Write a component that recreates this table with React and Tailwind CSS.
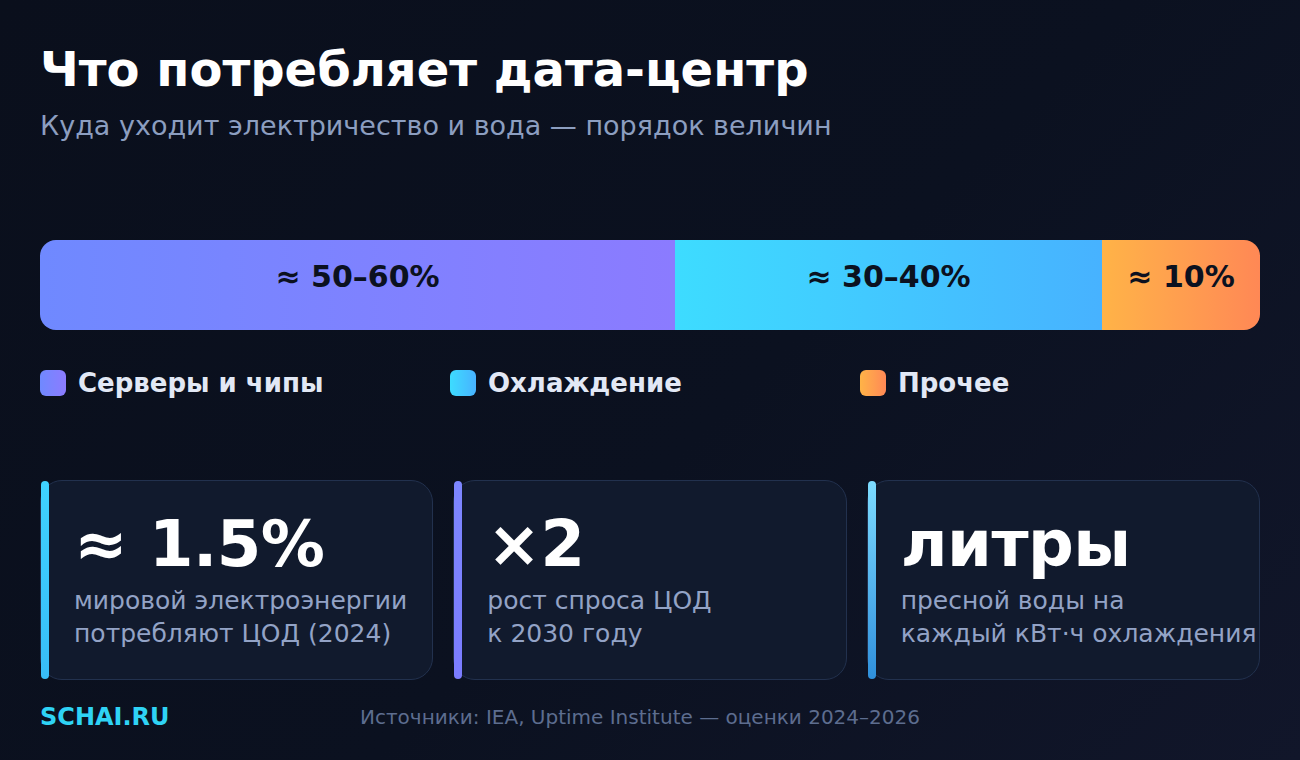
import React from 'react';

const segments = [
  { label: '≈ 50–60%', width: 'w-[635px]', bg: 'bg-gradient-to-r from-[#6f89ff] to-[#8b7bff]', round: 'rounded-l-[16px]' },
  { label: '≈ 30–40%', width: 'w-[427px]', bg: 'bg-gradient-to-r from-[#3ddcff] to-[#47b2ff]', round: '' },
  { label: '≈ 10%', width: 'flex-1', bg: 'bg-gradient-to-r from-[#ffb347] to-[#ff8855]', round: 'rounded-r-[16px]' },
];

const legend = [
  { label: 'Серверы и чипы', swatch: 'bg-gradient-to-r from-[#6f89ff] to-[#8b7bff]' },
  { label: 'Охлаждение', swatch: 'bg-gradient-to-r from-[#3ddcff] to-[#47b2ff]' },
  { label: 'Прочее', swatch: 'bg-gradient-to-r from-[#ffb347] to-[#ff8855]' },
];

const cards = [
  { value: '≈ 1.5%', lines: ['мировой электроэнергии', 'потребляют ЦОД (2024)'], accent: 'bg-gradient-to-b from-[#3fd2ff] to-[#38bdf8]' },
  { value: '×2', lines: ['рост спроса ЦОД', 'к 2030 году'], accent: 'bg-gradient-to-b from-[#7d86ff] to-[#7b7cff]' },
  { value: 'литры', lines: ['пресной воды на', 'каждый кВт·ч охлаждения'], accent: 'bg-gradient-to-b from-[#7ddcff] to-[#2f90dc]' },
];

export default function App() {
  return (
    <div className="w-[1300px] h-[760px] overflow-hidden bg-[linear-gradient(135deg,#0a0f1c_0%,#0b1120_55%,#11162a_100%)] px-10 pt-[45px] font-['DejaVu_Sans',sans-serif]">
      <h1 className="text-[48px] font-bold leading-none text-white">Что потребляет дата-центр</h1>
      <p className="mt-[19px] text-[27px] leading-none text-[#8c9ec0]">Куда уходит электричество и вода — порядок величин</p>

      {/* bar */}
      <div className="mt-[101px] flex h-[90px] w-[1220px]">
        {segments.map((s) => (
          <div key={s.label} className={`${s.width} ${s.bg} ${s.round} flex items-center justify-center pb-[16px]`}>
            <span className="text-[30px] font-bold leading-none text-[#0b1120]">{s.label}</span>
          </div>
        ))}
      </div>

      {/* legend */}
      <div className="mt-10 flex">
        {legend.map((l) => (
          <div key={l.label} className="flex w-[410px] shrink-0 items-center gap-3">
            <span className={`h-[26px] w-[26px] shrink-0 rounded-[6px] ${l.swatch}`}></span>
            <span className="text-[26px] font-bold leading-none text-[#e2e8f5]">{l.label}</span>
          </div>
        ))}
      </div>

      {/* stat cards */}
      <div className="mt-[84px] grid grid-cols-3 gap-5">
        {cards.map((c) => (
          <div key={c.value} className="relative h-[200px] rounded-[22px] border border-[#22314e] bg-[#111a2d] pl-[33px] pt-[31px]">
            <div className={`absolute left-0 top-0 bottom-0 w-2 rounded-full ${c.accent}`}></div>
            <div className="text-[64px] font-bold leading-none tracking-[-0.5px] text-white">{c.value}</div>
            <div className="mt-[8px] text-[25px] leading-[33px] text-[#93a3c6]">
              {c.lines.map((t) => (
                <div key={t} className="whitespace-nowrap">{t}</div>
              ))}
            </div>
          </div>
        ))}
      </div>

      {/* footer */}
      <div className="mt-[22px] flex h-[30px] items-center">
        <span className="w-[320px] text-[24px] font-bold text-[#2fd3f5]">SCHAI.RU</span>
        <span className="text-[20px] text-[#5d6d8f]">Источники: IEA, Uptime Institute — оценки 2024–2026</span>
      </div>
    </div>
  );
}
